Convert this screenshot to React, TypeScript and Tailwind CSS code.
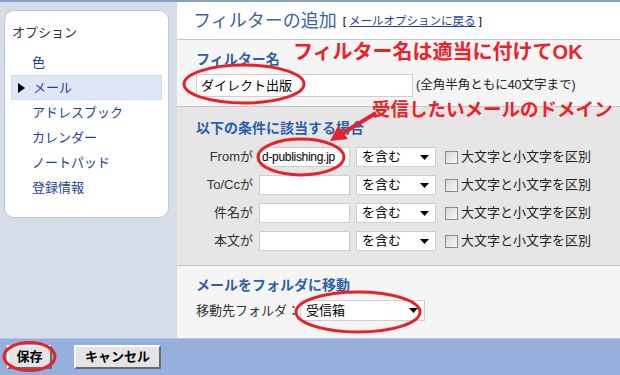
import React from 'react'

const jp = "font-['MS_UI_Gothic','Liberation_Sans','Noto_Sans_CJK_JP',sans-serif]"

const menu = ['色', 'メール', 'アドレスブック', 'カレンダー', 'ノートパッド', '登録情報']

const rows = [
  { label: 'Fromが', value: 'd-publishing.jp' },
  { label: 'To/Ccが', value: '' },
  { label: '件名が', value: '' },
  { label: '本文が', value: '' },
]

function SelectBox({ text, className }: { text: string; className: string }) {
  return (
    <div className={`flex items-center justify-between bg-white border border-[#d0d0d0] pl-[5px] pr-[6px] text-[13px] text-black ${className}`}>
      <span>{text}</span>
      <svg width="9" height="5" viewBox="0 0 9 5">
        <path d="M0 0h9L4.5 5z" fill="#000" />
      </svg>
    </div>
  )
}

function Checkbox() {
  return (
    <span className="inline-block w-[13px] h-[13px] border border-[#8a8a8a] bg-gradient-to-br from-[#d8d8d8] to-[#f8f8f8]" />
  )
}

export default function App() {
  return (
    <div className={`relative w-[620px] h-[375px] overflow-hidden flex flex-col ${jp}`}>
      <div className="h-[2px] bg-[#8aa2c9]" />

      <div className="flex flex-1 min-h-0">
        {/* sidebar */}
        <aside className="w-[177px] bg-[#d6dde9] pt-[8px] pl-[4px] pr-[8px]">
          <div className="bg-white border border-[#c2c8d2] rounded-[10px] pt-[14px] pb-[17px] pl-[6px] pr-[6px]">
            <div className="text-[13px] leading-[16px] text-[#333] pl-[1px]">オプション</div>
            <ul className="mt-[9px]">
              {menu.map((m) => (
                <li
                  key={m}
                  className={`h-[25px] flex items-center text-[13px] text-[#1d3f98] ${
                    m === 'メール' ? 'bg-[#dfe7f6] border border-[#d3dcec]' : ''
                  }`}
                >
                  <span className="w-[21px] flex justify-end pr-[8px]">
                    {m === 'メール' && (
                      <svg width="7" height="10" viewBox="0 0 7 10">
                        <path d="M0 0l7 5-7 5z" fill="#000" />
                      </svg>
                    )}
                  </span>
                  {m}
                </li>
              ))}
            </ul>
          </div>
        </aside>

        {/* content */}
        <main className="flex-1 flex flex-col">
          <div className="h-[38px] bg-white border-b border-[#c6c6c6] flex items-center pl-[16px] pt-[2px]">
            <span className="text-[18px] text-[#3b62a6]">フィルターの追加</span>
            <span className="ml-[6px] text-[11.5px] text-black">
              [ <span className="text-[#1d3f98] underline">メールオプションに戻る</span> ]
            </span>
          </div>

          <section className="h-[67px] bg-[#f5f5f5] border-b border-[#c6c6c6] pl-[19px] pt-[10px]">
            <div className="text-[14px] font-bold text-[#2f5ea6] leading-[18px]">フィルター名</div>
            <div className="flex items-center mt-[6px]">
              <div className="w-[217px] h-[23px] bg-white border border-[#cfcfcf] flex items-center pl-[4px] text-[13px] text-black">
                ダイレクト出版
              </div>
              <span className="ml-[3px] text-[12.5px] text-[#222]">(全角半角ともに40文字まで)</span>
            </div>
          </section>

          <section className="h-[159px] bg-[#e6e6e6] border-b border-[#c6c6c6] pl-[19px] pt-[12px]">
            <div className="text-[14px] font-bold text-[#2f5ea6] leading-[18px]">以下の条件に該当する場合</div>
            <div className="mt-[10px] flex flex-col gap-[8px]">
              {rows.map((r) => (
                <div key={r.label} className="flex items-center h-[20px]">
                  <span className="w-[57px] text-right text-[13px] text-[#333]">{r.label}</span>
                  <div className="ml-[6px] w-[91px] h-[20px] bg-white border border-[#cfcfcf] flex items-center pl-[2px] text-[12px] tracking-[-0.3px] text-black overflow-hidden whitespace-nowrap">
                    {r.value}
                  </div>
                  <SelectBox text="を含む" className="ml-[6px] w-[80px] h-[20px]" />
                  <span className="ml-[9px] flex items-center">
                    <Checkbox />
                  </span>
                  <span className="ml-[3px] text-[13px] text-[#222]">大文字と小文字を区別</span>
                </div>
              ))}
            </div>
          </section>

          <section className="flex-1 bg-[#f5f5f5] pl-[19px] pt-[10px]">
            <div className="text-[14px] font-bold text-[#2f5ea6] leading-[18px]">メールをフォルダに移動</div>
            <div className="flex items-center mt-[6px]">
              <span className="text-[13px] text-[#333]">移動先フォルダ：</span>
              <SelectBox text="受信箱" className="w-[125px] h-[21px]" />
            </div>
          </section>
        </main>
      </div>

      {/* bottom bar */}
      <div className="h-[37px] bg-[#95b0dd] border-t border-[#b8c6de] flex items-start pt-[6px] pl-[7px] gap-[22px]">
        <button className="w-[45px] h-[24px] bg-[#e4e4e4] border-2 border-t-white border-l-white border-b-[#6a6a6a] border-r-[#6a6a6a] text-[13px] font-bold text-black">
          保存
        </button>
        <button className="w-[87px] h-[24px] bg-[#e4e4e4] border-2 border-t-white border-l-white border-b-[#6a6a6a] border-r-[#6a6a6a] text-[13px] font-bold text-black">
          キャンセル
        </button>
      </div>

      {/* red annotations */}
      <div className="absolute left-[293px] top-[39px] text-[20px] font-bold text-[#f02028] leading-[26px] whitespace-nowrap">
        フィルター名は適当に付けてOK
      </div>
      <div className="absolute left-[372px] top-[97px] text-[18.5px] font-bold text-[#f02028] leading-[26px] whitespace-nowrap">
        受信したいメールのドメイン
      </div>
      <svg className="absolute inset-0 pointer-events-none" width="620" height="375" viewBox="0 0 620 375">
        <g fill="none" stroke="#e8202a" strokeWidth="3">
          <ellipse cx="244" cy="84" rx="60" ry="19" />
          <ellipse cx="301" cy="157" rx="43" ry="18" />
          <ellipse cx="358" cy="312" rx="62" ry="20" />
          <ellipse cx="29.5" cy="356.5" rx="25.5" ry="14" />
          <path d="M376 113 L343 133" strokeWidth="4" />
        </g>
        <path d="M330 141 L338 126 L348 139 Z" fill="#e8202a" />
      </svg>
    </div>
  )
}
